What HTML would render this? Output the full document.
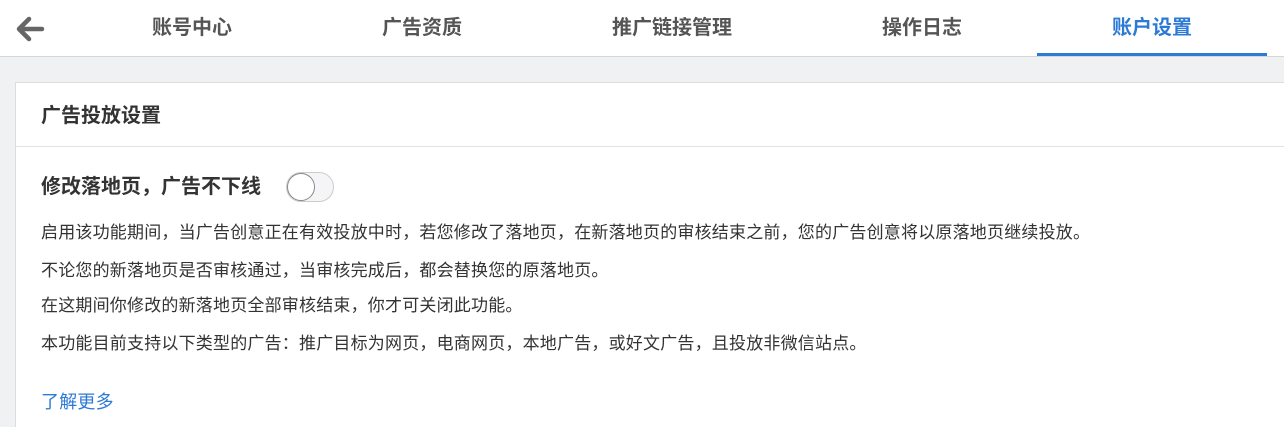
<!DOCTYPE html><html><head><meta charset="utf-8"><style>
*{margin:0;padding:0;box-sizing:border-box}
html,body{width:1284px;height:427px;overflow:hidden}
body{background:#f0f1f3;font-family:"Liberation Sans","Noto Sans CJK SC",sans-serif;position:relative;color:#333}
.nav{position:absolute;left:0;top:0;width:1284px;height:57px;background:#fff;border-bottom:1px solid #d6d6d6}
.tab{position:absolute;top:14px;width:230px;text-align:center;font-size:20px;font-weight:bold;color:#555;line-height:28px}
.act{color:#2d7ad6}
.ul{position:absolute;left:1037px;top:53px;width:230px;height:3px;background:#2d7ad6}
.card{position:absolute;left:15px;top:82px;width:1300px;height:345px;background:#fff;border:1px solid #ddd;border-bottom:none;overflow:hidden}
.h{position:absolute;left:25px;top:19px;font-size:20px;font-weight:bold;line-height:28px}
.line{position:absolute;left:0;top:63px;width:100%;height:1px;background:#e3e3e3}
.t{position:absolute;left:25px;font-size:17px;line-height:24px;color:#333;white-space:nowrap;letter-spacing:0.2px}
</style></head><body>
<div class="nav">
<svg style="position:absolute;left:14px;top:15px" width="32" height="28" viewBox="0 0 32 28"><path d="M28 14H5M15 4L5 14l10 10" stroke="#666" stroke-width="4.5" fill="none" stroke-linecap="round" stroke-linejoin="round"/></svg>
<div class="tab" style="left:77px">账号中心</div>
<div class="tab" style="left:307px">广告资质</div>
<div class="tab" style="left:557px">推广链接管理</div>
<div class="tab" style="left:807px">操作日志</div>
<div class="tab act" style="left:1037px">账户设置</div>
<div class="ul"></div>
</div>
<div class="card">
<div class="h">广告投放设置</div>
<div class="line"></div>
<div class="t" style="top:90px;font-size:20px;font-weight:bold;line-height:28px;letter-spacing:0">修改落地页，广告不下线</div>
<div style="position:absolute;left:270px;top:89px;width:48px;height:30px;border:1px solid #ccc;border-radius:15px;background:#f5f5f7"><div style="position:absolute;left:0;top:0;width:28px;height:28px;border-radius:50%;background:#fff;border:1px solid #888"></div></div>
<div class="t" style="top:138px">启用该功能期间，当广告创意正在有效投放中时，若您修改了落地页，在新落地页的审核结束之前，您的广告创意将以原落地页继续投放。</div>
<div class="t" style="top:176px">不论您的新落地页是否审核通过，当审核完成后，都会替换您的原落地页。</div>
<div class="t" style="top:211px">在这期间你修改的新落地页全部审核结束，你才可关闭此功能。</div>
<div class="t" style="top:249px">本功能目前支持以下类型的广告：推广目标为网页，电商网页，本地广告，或好文广告，且投放非微信站点。</div>
<div class="t" style="top:307px;color:#2d7ad6;font-size:18px">了解更多</div>
</div>
</body></html>
